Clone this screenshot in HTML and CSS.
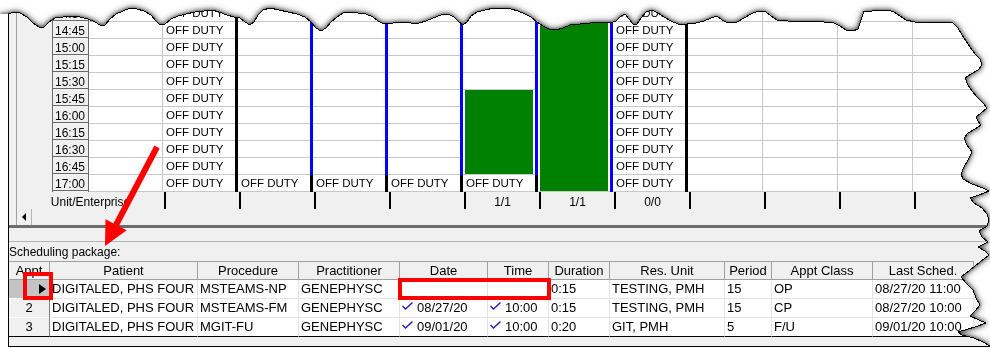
FILE: index.html
```html
<!DOCTYPE html>
<html lang="en">
<head>
    <meta charset="UTF-8">
    <meta name="viewport" content="width=device-width, initial-scale=1.0">
    <title>Scheduling package</title>
    <link rel="stylesheet" href="styles.css">
</head>
<body>

<div class="paper">
    <div class="shot">
        <div class="window">

            <div class="schedule">
                <div class="timegrid">
                    <div class="times">
                        <div class="time">14:30</div>
                        <div class="time">14:45</div>
                        <div class="time">15:00</div>
                        <div class="time">15:15</div>
                        <div class="time">15:30</div>
                        <div class="time">15:45</div>
                        <div class="time">16:00</div>
                        <div class="time">16:15</div>
                        <div class="time">16:30</div>
                        <div class="time">16:45</div>
                        <div class="time">17:00</div>
                    </div>

                    <div class="col blank">
                        <div class="cells">
                            <div class="cell"></div><div class="cell"></div><div class="cell"></div><div class="cell"></div>
                            <div class="cell"></div><div class="cell"></div><div class="cell"></div><div class="cell"></div>
                            <div class="cell"></div><div class="cell"></div><div class="cell"></div>
                        </div>
                    </div>

                    <div class="col">
                        <div class="cells">
                            <div class="cell">OFF DUTY</div><div class="cell">OFF DUTY</div><div class="cell">OFF DUTY</div>
                            <div class="cell">OFF DUTY</div><div class="cell">OFF DUTY</div><div class="cell">OFF DUTY</div>
                            <div class="cell">OFF DUTY</div><div class="cell">OFF DUTY</div><div class="cell">OFF DUTY</div>
                            <div class="cell">OFF DUTY</div><div class="cell">OFF DUTY</div>
                        </div>
                        <div class="bar"></div>
                    </div>

                    <div class="col">
                        <div class="cells">
                            <div class="cell"></div><div class="cell"></div><div class="cell"></div><div class="cell"></div>
                            <div class="cell"></div><div class="cell"></div><div class="cell"></div><div class="cell"></div>
                            <div class="cell"></div><div class="cell"></div><div class="cell">OFF DUTY</div>
                        </div>
                        <div class="bar blue-end"></div>
                    </div>

                    <div class="col">
                        <div class="cells">
                            <div class="cell"></div><div class="cell"></div><div class="cell"></div><div class="cell"></div>
                            <div class="cell"></div><div class="cell"></div><div class="cell"></div><div class="cell"></div>
                            <div class="cell"></div><div class="cell"></div><div class="cell">OFF DUTY</div>
                        </div>
                        <div class="bar blue-end"></div>
                    </div>

                    <div class="col">
                        <div class="cells">
                            <div class="cell"></div><div class="cell"></div><div class="cell"></div><div class="cell"></div>
                            <div class="cell"></div><div class="cell"></div><div class="cell"></div><div class="cell"></div>
                            <div class="cell"></div><div class="cell"></div><div class="cell">OFF DUTY</div>
                        </div>
                        <div class="bar blue-end"></div>
                    </div>

                    <div class="col">
                        <div class="cells">
                            <div class="cell"></div><div class="cell"></div><div class="cell"></div><div class="cell"></div>
                            <div class="cell"></div>
                            <div class="booked rows-5"><div class="fill"></div></div>
                            <div class="cell">OFF DUTY</div>
                        </div>
                        <div class="bar blue-end"></div>
                    </div>

                    <div class="col">
                        <div class="cells">
                            <div class="booked rows-11"><div class="fill"></div></div>
                        </div>
                        <div class="bar blue"></div>
                    </div>

                    <div class="col">
                        <div class="cells">
                            <div class="cell">OFF DUTY</div><div class="cell">OFF DUTY</div><div class="cell">OFF DUTY</div>
                            <div class="cell">OFF DUTY</div><div class="cell">OFF DUTY</div><div class="cell">OFF DUTY</div>
                            <div class="cell">OFF DUTY</div><div class="cell">OFF DUTY</div><div class="cell">OFF DUTY</div>
                            <div class="cell">OFF DUTY</div><div class="cell">OFF DUTY</div>
                        </div>
                        <div class="bar"></div>
                    </div>

                    <div class="col plain">
                        <div class="cells">
                            <div class="cell"></div><div class="cell"></div><div class="cell"></div><div class="cell"></div>
                            <div class="cell"></div><div class="cell"></div><div class="cell"></div><div class="cell"></div>
                            <div class="cell"></div><div class="cell"></div><div class="cell"></div>
                        </div>
                    </div>
                    <div class="col plain">
                        <div class="cells">
                            <div class="cell"></div><div class="cell"></div><div class="cell"></div><div class="cell"></div>
                            <div class="cell"></div><div class="cell"></div><div class="cell"></div><div class="cell"></div>
                            <div class="cell"></div><div class="cell"></div><div class="cell"></div>
                        </div>
                    </div>
                    <div class="col plain">
                        <div class="cells">
                            <div class="cell"></div><div class="cell"></div><div class="cell"></div><div class="cell"></div>
                            <div class="cell"></div><div class="cell"></div><div class="cell"></div><div class="cell"></div>
                            <div class="cell"></div><div class="cell"></div><div class="cell"></div>
                        </div>
                    </div>
                    <div class="col plain">
                        <div class="cells">
                            <div class="cell"></div><div class="cell"></div><div class="cell"></div><div class="cell"></div>
                            <div class="cell"></div><div class="cell"></div><div class="cell"></div><div class="cell"></div>
                            <div class="cell"></div><div class="cell"></div><div class="cell"></div>
                        </div>
                    </div>
                </div>

                <div class="totals">
                    <div class="total first">Unit/Enterprise</div>
                    <div class="total"></div>
                    <div class="total"></div>
                    <div class="total"></div>
                    <div class="total"></div>
                    <div class="total">1/1</div>
                    <div class="total">1/1</div>
                    <div class="total">0/0</div>
                    <div class="total"></div>
                    <div class="total"></div>
                    <div class="total"></div>
                    <div class="total"></div>
                </div>

                <div class="hscroll">
                    <div class="scroll-left"></div>
                </div>
            </div>

            <div class="splitter"></div>

            <div class="package">
                <div class="package-title">Scheduling package:</div>
                <div class="appts">
                    <div class="th">Appt</div>
                    <div class="th">Patient</div>
                    <div class="th">Procedure</div>
                    <div class="th">Practitioner</div>
                    <div class="th">Date</div>
                    <div class="th">Time</div>
                    <div class="th">Duration</div>
                    <div class="th">Res. Unit</div>
                    <div class="th">Period</div>
                    <div class="th">Appt Class</div>
                    <div class="th">Last Sched.</div>

                    <div class="td num current"></div>
                    <div class="td">DIGITALED, PHS FOUR</div>
                    <div class="td">MSTEAMS-NP</div>
                    <div class="td">GENEPHYSC</div>
                    <div class="td"></div>
                    <div class="td"></div>
                    <div class="td">0:15</div>
                    <div class="td">TESTING, PMH</div>
                    <div class="td">15</div>
                    <div class="td">OP</div>
                    <div class="td">08/27/20 11:00</div>

                    <div class="td num">2</div>
                    <div class="td">DIGITALED, PHS FOUR</div>
                    <div class="td">MSTEAMS-FM</div>
                    <div class="td">GENEPHYSC</div>
                    <div class="td"><svg class="tick" width="11" height="8" viewBox="0 0 11 8"><polyline points="0.5,4 3.5,7 10.5,0.5"/></svg>08/27/20</div>
                    <div class="td"><svg class="tick" width="11" height="8" viewBox="0 0 11 8"><polyline points="0.5,4 3.5,7 10.5,0.5"/></svg>10:00</div>
                    <div class="td">0:15</div>
                    <div class="td">TESTING, PMH</div>
                    <div class="td">15</div>
                    <div class="td">CP</div>
                    <div class="td">08/27/20 10:00</div>

                    <div class="td num">3</div>
                    <div class="td">DIGITALED, PHS FOUR</div>
                    <div class="td">MGIT-FU</div>
                    <div class="td">GENEPHYSC</div>
                    <div class="td"><svg class="tick" width="11" height="8" viewBox="0 0 11 8"><polyline points="0.5,4 3.5,7 10.5,0.5"/></svg>09/01/20</div>
                    <div class="td"><svg class="tick" width="11" height="8" viewBox="0 0 11 8"><polyline points="0.5,4 3.5,7 10.5,0.5"/></svg>10:00</div>
                    <div class="td">0:20</div>
                    <div class="td">GIT, PMH</div>
                    <div class="td">5</div>
                    <div class="td">F/U</div>
                    <div class="td">09/01/20 10:00</div>
                </div>
            </div>

        </div>
    </div>

    <!-- torn edge line, same points as the clip polygon in styles.css -->
    <svg class="torn-edge" width="990" height="348">
        <polyline points="8,14 14,12 20,13 27,17 33,23 39,27 44,27 49,22 55,18 63,17 72,16 80,17 88,19 95,22 100,25 105,25 110,19 116,14 123,11 130,8 137,9 144,11 151,15 156,21 160,25 165,24 171,19 178,16 186,14 195,12 204,11 212,10 219,12 227,15 234,17 240,18 245,22 250,25 254,22 258,15 263,10 270,8 279,10 288,12 297,14 305,17 311,22 316,28 321,31 326,28 331,22 337,17 343,13 350,12 358,13 366,14 373,17 378,21 384,24 393,23 402,22 411,23 419,23 426,21 433,18 441,15 448,14 454,17 459,22 463,25 467,22 471,16 477,12 485,10 494,8 503,8 511,9 518,11 525,14 531,17 537,22 543,26 549,29 556,30 563,28 570,25 580,24 590,23 600,22 610,23 616,21 621,16 625,14 629,19 633,24 637,24 641,18 646,12 652,10 658,13 664,17 671,21 678,24 687,24 696,23 704,21 711,18 717,16 722,20 728,23 737,22 744,18 751,14 758,11 766,12 771,16 777,20 788,21 800,22 812,21 824,22 834,23 840,26 846,30 853,31 858,29 861,20 864,11 872,11 881,10 888,10 894,12 900,16 906,20 915,22 925,22 935,23 946,22 953,23 958,28 962,35 966,41 970,47 975,54 980,59 982,65 978,70 971,74 965,78 968,85 972,91 977,97 984,104 987,108 981,113 976,117 978,121 981,125 975,129 968,133 964,138 967,145 972,152 968,160 964,167 961,174 963,179 972,184 983,188 989,191 979,195 970,198 974,203 982,208 987,214 989,220 987,226 979,231 982,237 988,242 978,247 985,251 989,255 980,262 970,270 961,277 966,283 973,290 976,298 980,305 975,311 970,316 979,320 986,323 975,327 958,332 962,335 974,338 983,342 990,346"/>
    </svg>

    <div class="mark mark-current"></div>
    <div class="mark mark-slot"></div>

    <svg class="pointer" width="990" height="348">
        <line x1="157" y1="147" x2="116" y2="225"/>
        <polygon points="105,246 105.5,219.2 126.7,230.2"/>
    </svg>
</div>

</body>
</html>
```

FILE: styles.css
```css
body {
    margin: 0;
    background-color: #fff;
    font-family: "Liberation Sans", Arial, sans-serif;
    color: #000;
}
.paper {
    position: relative;
    width: 990px;
    height: 348px;
    overflow: hidden;
    filter: drop-shadow(0 0 2px rgba(0, 0, 0, 0.6)) drop-shadow(0 0 3px rgba(0, 0, 0, 0.5));
}
.shot {
    height: 348px;
    background-color: #fff;
    clip-path: polygon(-10px 14px, 8px 14px, 14px 12px, 20px 13px, 27px 17px, 33px 23px, 39px 27px, 44px 27px, 49px 22px, 55px 18px, 63px 17px, 72px 16px, 80px 17px, 88px 19px, 95px 22px, 100px 25px, 105px 25px, 110px 19px, 116px 14px, 123px 11px, 130px 8px, 137px 9px, 144px 11px, 151px 15px, 156px 21px, 160px 25px, 165px 24px, 171px 19px, 178px 16px, 186px 14px, 195px 12px, 204px 11px, 212px 10px, 219px 12px, 227px 15px, 234px 17px, 240px 18px, 245px 22px, 250px 25px, 254px 22px, 258px 15px, 263px 10px, 270px 8px, 279px 10px, 288px 12px, 297px 14px, 305px 17px, 311px 22px, 316px 28px, 321px 31px, 326px 28px, 331px 22px, 337px 17px, 343px 13px, 350px 12px, 358px 13px, 366px 14px, 373px 17px, 378px 21px, 384px 24px, 393px 23px, 402px 22px, 411px 23px, 419px 23px, 426px 21px, 433px 18px, 441px 15px, 448px 14px, 454px 17px, 459px 22px, 463px 25px, 467px 22px, 471px 16px, 477px 12px, 485px 10px, 494px 8px, 503px 8px, 511px 9px, 518px 11px, 525px 14px, 531px 17px, 537px 22px, 543px 26px, 549px 29px, 556px 30px, 563px 28px, 570px 25px, 580px 24px, 590px 23px, 600px 22px, 610px 23px, 616px 21px, 621px 16px, 625px 14px, 629px 19px, 633px 24px, 637px 24px, 641px 18px, 646px 12px, 652px 10px, 658px 13px, 664px 17px, 671px 21px, 678px 24px, 687px 24px, 696px 23px, 704px 21px, 711px 18px, 717px 16px, 722px 20px, 728px 23px, 737px 22px, 744px 18px, 751px 14px, 758px 11px, 766px 12px, 771px 16px, 777px 20px, 788px 21px, 800px 22px, 812px 21px, 824px 22px, 834px 23px, 840px 26px, 846px 30px, 853px 31px, 858px 29px, 861px 20px, 864px 11px, 872px 11px, 881px 10px, 888px 10px, 894px 12px, 900px 16px, 906px 20px, 915px 22px, 925px 22px, 935px 23px, 946px 22px, 953px 23px, 958px 28px, 962px 35px, 966px 41px, 970px 47px, 975px 54px, 980px 59px, 982px 65px, 978px 70px, 971px 74px, 965px 78px, 968px 85px, 972px 91px, 977px 97px, 984px 104px, 987px 108px, 981px 113px, 976px 117px, 978px 121px, 981px 125px, 975px 129px, 968px 133px, 964px 138px, 967px 145px, 972px 152px, 968px 160px, 964px 167px, 961px 174px, 963px 179px, 972px 184px, 983px 188px, 989px 191px, 979px 195px, 970px 198px, 974px 203px, 982px 208px, 987px 214px, 989px 220px, 987px 226px, 979px 231px, 982px 237px, 988px 242px, 978px 247px, 985px 251px, 989px 255px, 980px 262px, 970px 270px, 961px 277px, 966px 283px, 973px 290px, 976px 298px, 980px 305px, 975px 311px, 970px 316px, 979px 320px, 986px 323px, 975px 327px, 958px 332px, 962px 335px, 974px 338px, 983px 342px, 990px 346px, 1000px 346px, 1000px 360px, -10px 360px);
}
.window {
    margin-left: 8px;
    height: 347px;
    box-sizing: border-box;
    border-left: 1px solid #000;
    border-bottom: 1px solid #000;
    background-color: #f0f0f0;
    overflow: hidden;
}

/* upper schedule */
.schedule {
    margin-left: 7px;
    border-left: 1px solid #a0a0a0;
}
.timegrid {
    display: flex;
    padding-top: 5px;
}
.times {
    flex: none;
    margin-left: 35px;
    width: 37px;
    box-sizing: border-box;
    border-left: 1px solid #696969;
    border-right: 1px solid #696969;
}
.time {
    height: 16px;
    margin-bottom: 1px;
    box-sizing: border-box;
    border-bottom: 1px solid #696969;
    padding: 2px 0 0 2px;
    font-size: 12px;
    line-height: 15px;
}
.col {
    flex: none;
    display: flex;
    width: 75px;
    background-color: #fff;
}
.col.blank {
    width: 74px;
}
.col.blank,
.col.plain {
    box-sizing: border-box;
    border-right: 1px solid #c8c8c8;
}
.cells {
    flex: 1;
    min-width: 0;
}
.cell {
    height: 17px;
    box-sizing: border-box;
    border-bottom: 1px solid #c8c8c8;
    padding-left: 3px;
    font-size: 11.5px;
    line-height: 16px;
    white-space: nowrap;
    overflow: hidden;
}
.bar {
    width: 3px;
    background-color: #000;
}
.bar.blue {
    background-color: #0000ff;
}
.bar.blue-end {
    background: linear-gradient(#0000ff 170px, #000 170px);
}
.booked {
    box-sizing: border-box;
    border-bottom: 1px solid #c8c8c8;
    padding: 0 2px;
}
.booked .fill {
    height: 100%;
    background-color: #008000;
}
.rows-5 {
    height: 85px;
}
.rows-11 {
    height: 187px;
}

.totals {
    display: flex;
    height: 17px;
}
.total {
    flex: none;
    width: 75px;
    box-sizing: border-box;
    border-right: 2px solid #000;
    font-size: 12px;
    line-height: 21px;
    text-align: center;
    white-space: nowrap;
    overflow: hidden;
}
.total.first {
    width: 149px;
}
.hscroll {
    display: flex;
    height: 16px;
}
.scroll-left {
    width: 14px;
    border-right: 1px solid #b4b4b4;
    display: flex;
    align-items: center;
    justify-content: center;
}
.scroll-left::before {
    content: "";
    border-right: 4px solid #000;
    border-top: 4px solid transparent;
    border-bottom: 4px solid transparent;
}
.splitter {
    height: 3px;
    background-color: #6d6d6d;
}

/* scheduling package */
.package {
    margin-top: 13px;
    border-top: 1px solid #b4b4b4;
}
.package-title {
    height: 19px;
    font-size: 12px;
    line-height: 21px;
}
.appts {
    display: grid;
    grid-template-columns: 41px 148px 101px 101px 88px 61px 61px 115px 47px 101px 101px;
}
.th {
    height: 19px;
    box-sizing: border-box;
    border-top: 1px solid #a0a0a0;
    border-bottom: 1px solid #a0a0a0;
    border-right: 1px solid #a0a0a0;
    background-color: #f0f0f0;
    font-size: 13px;
    line-height: 17px;
    text-align: center;
    white-space: nowrap;
    overflow: hidden;
}
.td {
    height: 19px;
    box-sizing: border-box;
    border-right: 1px solid #e3e3e3;
    border-bottom: 1px solid #e3e3e3;
    background-color: #fff;
    padding-left: 2px;
    font-size: 13px;
    line-height: 18px;
    white-space: nowrap;
    overflow: hidden;
}
.td.num {
    padding-left: 0;
    text-align: center;
    background-color: #f0f0f0;
    border-right-color: #808080;
    border-bottom-color: #fff;
}
.td.current {
    display: flex;
    align-items: center;
    justify-content: flex-end;
    padding-right: 3px;
    background-color: #c4c4c4;
}
.td.current::after {
    content: "";
    border-left: 7px solid #000;
    border-top: 5px solid transparent;
    border-bottom: 5px solid transparent;
}
.appts .td:nth-last-child(-n+11) {
    border-bottom-color: #000;
}
.tick {
    margin-right: 4px;
    vertical-align: 2px;
    fill: none;
    stroke: #2020b0;
    stroke-width: 1.4;
}

/* overlays */
.torn-edge,
.pointer {
    position: absolute;
    left: 0;
    top: 0;
}
.torn-edge polyline {
    fill: none;
    stroke: #000;
    stroke-width: 1;
    shape-rendering: crispEdges;
}
.pointer line {
    stroke: #ff0000;
    stroke-width: 6;
}
.pointer polygon {
    fill: #ff0000;
}
.mark {
    position: absolute;
    box-sizing: border-box;
    border: 4px solid #ff0000;
}
.mark-current {
    left: 23px;
    top: 272px;
    width: 30px;
    height: 28px;
}
.mark-slot {
    left: 398px;
    top: 278px;
    width: 153px;
    height: 22px;
}
```
